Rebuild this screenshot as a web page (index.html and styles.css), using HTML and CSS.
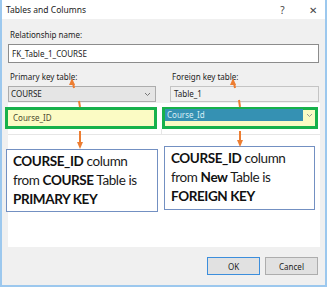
FILE: index.html
```html
<!DOCTYPE html>
<html lang="en">
<head>
    <meta charset="UTF-8">
    <title>Tables and Columns</title>
    <link rel="stylesheet" href="styles.css">
</head>
<body>
    <div class="page">
        <div class="window">
            <div class="titlebar">
                <span class="title">Tables and Columns</span>
                <span class="tb-btn help">?</span>
                <span class="tb-btn close">&#x2715;</span>
            </div>
            <div class="content">
                <div class="label first">Relationship name:</div>
                <div class="textbox">FK_Table_1_COURSE</div>

                <div class="keys">
                    <div class="key-col">
                        <div class="label">Primary key table:</div>
                        <div class="select">
                            <span>COURSE</span>
                            <svg class="chev" width="7" height="5" viewBox="0 0 7 5"><polyline points="1,1 3.5,3.5 6,1" fill="none" stroke="#777" stroke-width="1"/></svg>
                        </div>
                    </div>
                    <div class="key-col">
                        <div class="label">Foreign key table:</div>
                        <div class="readonly">Table_1</div>
                    </div>
                </div>

                <div class="panel">
                    <div class="green-row">
                        <div class="green left">
                            <span class="col-name">Course_ID</span>
                        </div>
                        <div class="green right">
                            <div class="picked">
                                <span class="bar">Course_Id</span>
                                <span class="drop">
                                    <svg width="7" height="5" viewBox="0 0 7 5"><polyline points="1,1 3.5,3.5 6,1" fill="none" stroke="#999" stroke-width="1"/></svg>
                                </span>
                            </div>
                        </div>
                    </div>
                    <div class="grid-row">
                        <div class="cell"></div>
                        <div class="cell"></div>
                    </div>
                    <div class="notes">
                        <div class="note left"><b>COURSE_ID</b> column<br>from <b>COURSE</b> Table is<br><b>PRIMARY KEY</b></div>
                        <div class="note right"><b>COURSE_ID</b> column<br>from <b>New</b> Table is<br><b>FOREIGN KEY</b></div>
                    </div>
                </div>

                <div class="buttons">
                    <button class="btn ok">OK</button>
                    <button class="btn">Cancel</button>
                </div>
            </div>
        </div>

        <!-- orange annotation arrows drawn over the dialog -->
        <svg class="arrows" width="327" height="287" viewBox="0 0 327 287">
            <g stroke="#ed7d31" stroke-width="2" fill="none">
                <line x1="73" y1="83" x2="74" y2="88"/>
                <line x1="79" y1="101" x2="80" y2="107"/>
                <line x1="80" y1="131" x2="80" y2="143"/>
                <line x1="234" y1="83" x2="235" y2="88"/>
                <line x1="239" y1="100" x2="240" y2="107"/>
                <line x1="240" y1="131" x2="240" y2="141"/>
            </g>
            <g fill="#ed7d31">
                <polygon points="72,78 69,85 75,85"/>
                <polygon points="233,78 230,85 236,85"/>
                <polygon points="80,149 77,142 83,142"/>
                <polygon points="240,147 237,140 243,140"/>
            </g>
        </svg>
    </div>
</body>
</html>
```

FILE: styles.css
```css
body {
    margin: 0;
    font-family: "Noto Sans", "Open Sans", sans-serif;
    color: #222;
}
.page {
    position: relative;
    width: 327px;
    height: 287px;
}
.window {
    width: 327px;
    height: 287px;
    box-sizing: border-box;
    border: 2px solid #9cc8ee;
    border-top: 0;
    background: #f0f0f0;
    display: flex;
    flex-direction: column;
}
.titlebar {
    height: 19px;
    background: #fff;
    display: flex;
    align-items: center;
    padding-left: 4px;
    font-size: 8.5px;
}
.title {
    flex: 1;
}
.tb-btn {
    width: 25px;
    text-align: center;
    color: #444;
    font-size: 10px;
}
.help {
    margin-right: 5px;
}
.content {
    flex: 1;
    padding: 0 6px;
    display: flex;
    flex-direction: column;
}
.label {
    font-size: 8px;
    line-height: 11px;
    padding-left: 2px;
    margin-top: 8px;
}
.label.first {
    margin-top: 10px;
}
.textbox {
    margin-top: 4px;
    height: 19px;
    box-sizing: border-box;
    border: 1px solid #8c8c8c;
    background: #fff;
    font-size: 8px;
    line-height: 17px;
    padding-left: 3px;
}
.keys {
    display: grid;
    grid-template-columns: 148px 1fr;
    column-gap: 14px;
}
.select, .readonly {
    margin-top: 4px;
    height: 16px;
    box-sizing: border-box;
    font-size: 8px;
    line-height: 14px;
    padding-left: 2px;
}
.select {
    background: #e5e5e5;
    border: 1px solid #acacac;
    display: flex;
    justify-content: space-between;
    align-items: center;
}
.chev {
    margin-right: 4px;
}
.readonly {
    background: #f0f0f0;
    border: 1px solid #c4c4c4;
    padding-left: 3px;
}
.panel {
    margin-top: 1px;
    height: 144px;
    background: #fff;
    padding-top: 4px;
    box-sizing: border-box;
    margin-right: -1px;
}
.green-row {
    display: flex;
    gap: 5px;
    margin-left: -3px;
}
.green {
    height: 22px;
    box-sizing: border-box;
    border: 3px solid #17b14b;
    background: #fbfbc4;
    font-size: 8px;
}
.green.left {
    width: 152px;
    padding-left: 5px;
    line-height: 16px;
    color: #4c4c30;
}
.green.right {
    width: 156px;
}
.picked {
    display: flex;
    height: 12px;
    margin-top: -1px;
}
.bar {
    flex: 1;
    background: #3591b3;
    color: #d7eef5;
    line-height: 12px;
    padding-left: 2px;
}
.drop {
    width: 12px;
    display: flex;
    align-items: center;
    justify-content: center;
}
.grid-row {
    display: grid;
    grid-template-columns: 154px 1fr;
    height: 5px;
    border-bottom: 1px solid #e6e6e6;
}
.grid-row .cell:first-child {
    border-right: 1px solid #e6e6e6;
}
.notes {
    display: flex;
    gap: 6px;
    margin-left: -2px;
    align-items: flex-start;
}
.note {
    box-sizing: border-box;
    border: 1px solid #7390c2;
    background: #fff;
    font-family: Lato, "Open Sans", sans-serif;
    font-size: 13.5px;
    letter-spacing: -0.4px;
    line-height: 19px;
    color: #1a1a1a;
    padding: 2px 2px 1px 6px;
    white-space: nowrap;
}
.note b {
    font-weight: 700;
    color: #111;
}
.note.left {
    width: 152px;
    height: 63px;
    margin-top: 14px;
}
.note.right {
    width: 151px;
    height: 64px;
    margin-top: 11px;
}
.buttons {
    display: flex;
    justify-content: flex-end;
    gap: 5px;
    margin-top: 10px;
    padding-right: 1px;
}
.btn {
    width: 53px;
    height: 18px;
    font-family: "Noto Sans", "Open Sans", sans-serif;
    font-size: 8px;
    color: #222;
    background: #e1e1e1;
    border: 1px solid #adadad;
    padding: 0;
}
.btn.ok {
    border-color: #3c8edc;
}
.arrows {
    position: absolute;
    left: 0;
    top: 0;
    pointer-events: none;
}
```
